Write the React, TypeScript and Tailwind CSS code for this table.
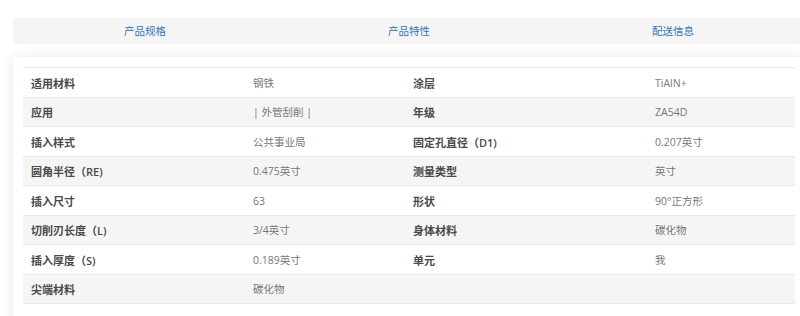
const tabs = ['产品规格', '产品特性', '配送信息'];

const rows: [string, string, string, string][] = [
  ['适用材料', '钢铁', '涂层', 'TiAlN+'],
  ['应用', '| 外管刮削 |', '年级', 'ZA54D'],
  ['插入样式', '公共事业局', '固定孔直径（D1)', '0.207英寸'],
  ['圆角半径（RE)', '0.475英寸', '测量类型', '英寸'],
  ['插入尺寸', '63', '形状', '90°正方形'],
  ['切削刃长度（L)', '3/4英寸', '身体材料', '碳化物'],
  ['插入厚度（S)', '0.189英寸', '单元', '我'],
  ['尖端材料', '碳化物', '', ''],
];

export default function App() {
  return (
    <div
      className="w-[800px] h-[316px] overflow-hidden bg-white pt-[18px] pl-[13px]"
      style={{ fontFamily: '"Open Sans", "Noto Sans CJK SC", sans-serif' }}
    >
      {/* tabs */}
      <div className="grid grid-cols-3 w-[792px] h-[26px] bg-[#f5f5f5]">
        {tabs.map((t) => (
          <div key={t} className="flex items-center justify-center pt-[2px] text-[10.5px] text-[#2f74c8]">
            {t}
          </div>
        ))}
      </div>

      {/* spec card */}
      <div className="mt-[13px] w-[792px] h-[300px] bg-white px-[10px] pt-[10px] shadow-[0_0_12px_rgba(0,0,0,0.09)]">
        <div className="border-t border-[#e6e6e6]">
          {rows.map((r, i) => (
            <div
              key={i}
              className={`grid grid-cols-[222px_160px_242px_148px] h-[29.5px] items-center pt-[3px] border-b border-[#e9e9e9] text-[10.5px] ${
                i % 2 === 1 ? 'bg-[#f5f5f5]' : 'bg-white'
              }`}
            >
              <div className="pl-[8px] text-[11px] font-semibold text-[#4a4a4a]">{r[0]}</div>
              <div className="pl-[8px] text-[#777]">{r[1]}</div>
              <div className="pl-[8px] text-[11px] font-semibold text-[#4a4a4a]">{r[2]}</div>
              <div className="pl-[8px] text-[#777]">{r[3]}</div>
            </div>
          ))}
        </div>
      </div>
    </div>
  );
}
